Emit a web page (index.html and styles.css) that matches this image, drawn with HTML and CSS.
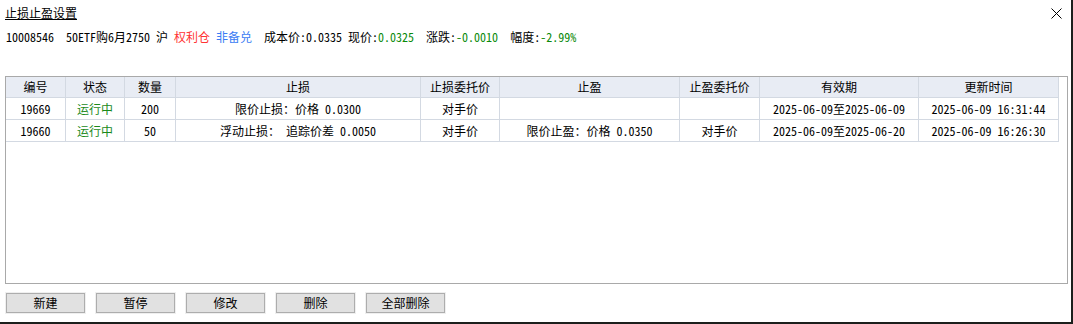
FILE: index.html
```html
<!DOCTYPE html>
<html lang="zh-CN">

<head>
    <meta charset="UTF-8">
    <title>止损止盈设置</title>
    <link rel="stylesheet" href="styles.css">
</head>

<body>

    <div class="window">
        <div class="titlebar">
            <span class="title">止损止盈设置</span>
            <span class="close">
                <svg width="11" height="11" viewBox="0 0 11 11">
                    <path d="M0.5 0.5 L10.5 10.5 M10.5 0.5 L0.5 10.5" stroke="#000" stroke-width="1" fill="none"/>
                </svg>
            </span>
        </div>

        <div class="info">10008546  50ETF购6月2750 沪 <span class="red">权利仓</span> <span class="blue">非备兑</span>  成本价:0.0335 现价:<span class="green">0.0325</span>  涨跌:<span class="green">-0.0010</span>  幅度:<span class="green">-2.99%</span></div>

        <div class="orders">
            <div class="row head">
                <div class="cell">编号</div>
                <div class="cell">状态</div>
                <div class="cell">数量</div>
                <div class="cell">止损</div>
                <div class="cell">止损委托价</div>
                <div class="cell">止盈</div>
                <div class="cell">止盈委托价</div>
                <div class="cell">有效期</div>
                <div class="cell">更新时间</div>
            </div>
            <div class="row">
                <div class="cell">19669</div>
                <div class="cell running">运行中</div>
                <div class="cell">200</div>
                <div class="cell">限价止损：价格 0.0300</div>
                <div class="cell">对手价</div>
                <div class="cell"></div>
                <div class="cell"></div>
                <div class="cell">2025-06-09至2025-06-09</div>
                <div class="cell">2025-06-09 16:31:44</div>
            </div>
            <div class="row">
                <div class="cell">19660</div>
                <div class="cell running">运行中</div>
                <div class="cell">50</div>
                <div class="cell">浮动止损： 追踪价差 0.0050</div>
                <div class="cell">对手价</div>
                <div class="cell">限价止盈：价格 0.0350</div>
                <div class="cell">对手价</div>
                <div class="cell">2025-06-09至2025-06-20</div>
                <div class="cell">2025-06-09 16:26:30</div>
            </div>
        </div>

        <div class="actions">
            <button>新建</button>
            <button>暂停</button>
            <button>修改</button>
            <button>删除</button>
            <button>全部删除</button>
        </div>
    </div>

</body>

</html>
```

FILE: styles.css
```css
body {
    margin: 0;
    background-color: #1c1f1c;
    font-family: "Noto Sans Mono CJK SC", "Noto Sans CJK SC", "DejaVu Sans Mono", monospace;
    font-size: 12px;
    color: #000;
}

.window {
    width: 1071px;
    height: 322px;
    background-color: #fff;
    overflow: hidden;
}

.titlebar {
    height: 26px;
    display: flex;
    align-items: center;
    justify-content: space-between;
    padding: 0 9px 0 5px;
}

.title {
    line-height: 14px;
    text-decoration: underline;
    text-underline-offset: 1px;
}

.close {
    display: flex;
    height: 11px;
}

.info {
    height: 22px;
    line-height: 22px;
    padding-left: 6px;
    white-space: pre;
}

.red {
    color: #f33;
}

.blue {
    color: #3b7cf4;
}

.green {
    color: #0b8a0b;
}

/* order list */
.orders {
    margin: 28px 0 0 5px;
    width: 1063px;
    height: 208px;
    box-sizing: border-box;
    border: 1px solid #a9a9a9;
}

.row {
    display: grid;
    grid-template-columns: 60px 59px 51px 245px 79px 180px 80px 159px 140px;
}

.cell {
    height: 22px;
    line-height: 21px;
    box-sizing: border-box;
    border-right: 1px solid #d3d9e2;
    border-bottom: 1px solid #d3d9e2;
    text-align: center;
    white-space: pre;
    overflow: hidden;
}

.head .cell {
    height: 21px;
    line-height: 20px;
    background-color: #e8ecf4;
}

.running {
    color: #1a8a1a;
}

/* buttons */
.actions {
    display: flex;
    gap: 11px;
    margin-top: 9px;
    padding-left: 6px;
}

button {
    width: 79px;
    height: 20px;
    padding: 0;
    font-family: inherit;
    font-size: 12px;
    line-height: 18px;
    color: #000;
    background-color: #e1e1e1;
    border: 1px solid #adadad;
    box-shadow: 0 0 0 1px #efefef;
}
```
